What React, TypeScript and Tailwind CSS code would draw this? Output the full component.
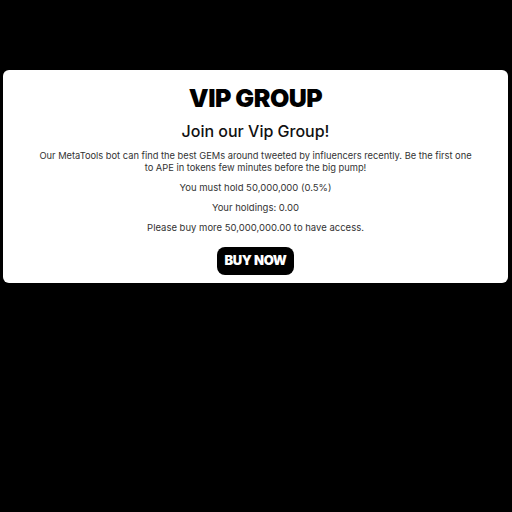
export default function App() {
  return (
    <div className="min-h-[512px] w-full bg-black pt-[70px] pl-[3px] pr-[4px]" style={{ fontFamily: 'Inter, "Noto Sans", sans-serif' }}>
      <div className="flex flex-col items-center rounded-[6px] bg-white pt-[12px] pb-[8px] text-center">
        <h1 className="text-[25px] font-black leading-[32px] tracking-[-0.5px] text-black">VIP GROUP</h1>
        <h2 className="mt-[6px] text-[16px] font-medium leading-[22px] text-[#111]">Join our Vip Group!</h2>
        <p className="mt-[8px] max-w-[440px] text-[9.3px] leading-[12px] text-[#333]">
          Our MetaTools bot can find the best GEMs around tweeted by influencers recently. Be the first one to APE in tokens few minutes before the big pump!
        </p>
        <p className="mt-[7px] text-[9.5px] leading-[13px] text-[#333]">You must hold 50,000,000 (0.5%)</p>
        <p className="mt-[7px] text-[9.5px] leading-[13px] text-[#333]">Your holdings: 0.00</p>
        <p className="mt-[7px] text-[9.5px] leading-[13px] text-[#333]">Please buy more 50,000,000.00 to have access.</p>
        <button className="mt-[13px] h-[28px] rounded-[8px] bg-black px-[7px] text-[13px] font-black tracking-[-0.3px] text-white">BUY NOW</button>
      </div>
    </div>
  );
}
